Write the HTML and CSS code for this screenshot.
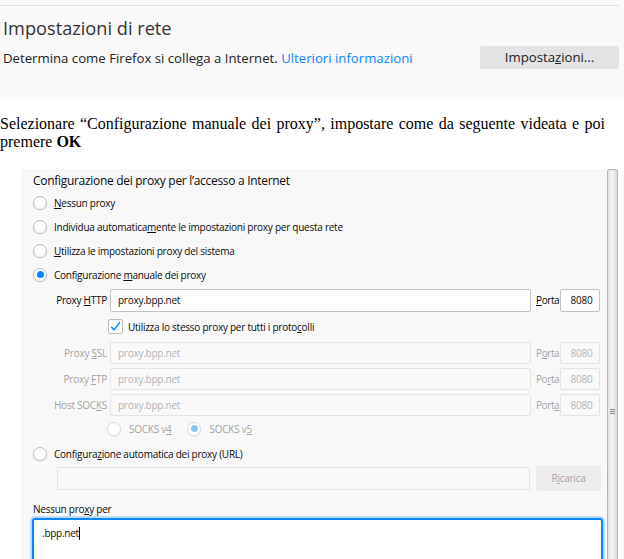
FILE: index.html
```html
<!DOCTYPE html>
<html lang="it">
<head>
<meta charset="utf-8">
<title>Impostazioni di rete</title>
<link rel="stylesheet" href="styles.css">
</head>
<body>
<section class="net">
  <div class="net-rule"></div>
  <h2 class="net-title">Impostazioni di rete</h2>
  <div class="net-row">
    <p class="net-desc">Determina come Firefox si collega a Internet. <a class="net-link">Ulteriori informazioni</a></p>
    <div class="net-btn">Imposta<u>z</u>ioni...</div>
  </div>
</section>

<p class="instr"><span>Selezionare “Configurazione manuale dei proxy”, impostare come da seguente videata e poi</span> <span>premere</span> <b>OK</b></p>

<div class="shot">
  <div class="panel">
    <div class="p-head">Configurazione dei proxy per l’accesso a Internet</div>

    <div class="rrow first"><span class="radio"></span><span><u>N</u>essun proxy</span></div>
    <div class="rrow"><span class="radio"></span><span>Individua automatica<u>m</u>ente le impostazioni proxy per questa rete</span></div>
    <div class="rrow"><span class="radio"></span><span><u>U</u>tilizza le impostazioni proxy del sistema</span></div>
    <div class="rrow"><span class="radio on"></span><span>Configurazione <u>m</u>anuale dei proxy</span></div>

    <div class="field http">
      <span class="f-label">Proxy <u>H</u>TTP</span>
      <div class="f-input">proxy.bpp.net</div>
      <span class="f-porta"><u>P</u>orta</span>
      <div class="f-port">8080</div>
    </div>

    <div class="crow"><span class="check"><svg viewBox="0 0 15 15" width="15" height="15"><path d="M3.6 8.2 L6.2 10.9 L11.6 3.6" fill="none" stroke="#0a84ff" stroke-width="1.5" stroke-linecap="round" stroke-linejoin="round"/></svg></span><span>Utilizza lo stesso proxy per tutti i proto<u>c</u>olli</span></div>

    <div class="field dis">
      <span class="f-label">Proxy <u>S</u>SL</span>
      <div class="f-input">proxy.bpp.net</div>
      <span class="f-porta">P<u>o</u>rta</span>
      <div class="f-port">8080</div>
    </div>
    <div class="field dis gap">
      <span class="f-label">Proxy <u>F</u>TP</span>
      <div class="f-input">proxy.bpp.net</div>
      <span class="f-porta">Po<u>r</u>ta</span>
      <div class="f-port">8080</div>
    </div>
    <div class="field dis gap">
      <span class="f-label">Host SOC<u>K</u>S</span>
      <div class="f-input">proxy.bpp.net</div>
      <span class="f-porta">Port<u>a</u></span>
      <div class="f-port">8080</div>
    </div>

    <div class="srow">
      <span class="radio dis"></span><span class="s-label">SOCKS v<u>4</u></span>
      <span class="radio dis on"></span><span class="s-label">SOCKS v<u>5</u></span>
    </div>

    <div class="rrow"><span class="radio"></span><span>Configura<u>z</u>ione automatica dei proxy (URL)</span></div>

    <div class="urow">
      <div class="u-input"></div>
      <div class="u-btn">R<u>i</u>carica</div>
    </div>

    <div class="np-label">Nessun pro<u>x</u>y per</div>
    <div class="np-area">.bpp.net<span class="caret"></span></div>
  </div>
  <div class="sbar"><div class="thumb"><span class="grip"></span></div></div>
</div>
</body>
</html>
```

FILE: styles.css
```css
html, body {
  margin: 0;
  padding: 0;
  height: 559px;
  overflow: hidden;
  background: #fff;
}

body {
  font-family: "Open Sans", "Noto Sans", sans-serif;
  color: #0c0c0d;
}

/* ---------- Firefox network section ---------- */
.net {
  background: #f9f9f9;
  height: 97px;
  box-sizing: border-box;
  padding-top: 5px;
}

.net-rule {
  width: 619px;
  height: 1px;
  background: #e0e0e2;
}

.net-title {
  margin: 11px 0 0 3px;
  font-size: 18.2px;
  line-height: 23px;
  font-weight: 400;
  color: #333;
}

.net-row {
  display: flex;
  align-items: center;
  height: 23px;
  margin: 6px 5px 0 3px;
}

.net-desc {
  flex: 1;
  margin: 0;
  font-size: 13.2px;
  color: #222;
  white-space: nowrap;
}

.net-link {
  color: #0a84ff;
}

.net-btn {
  width: 139px;
  height: 23px;
  line-height: 23px;
  text-align: center;
  background: #e3e3e5;
  border-radius: 2px;
  font-size: 13.2px;
  color: #222;
}

/* ---------- instruction ---------- */
.instr {
  width: 605px;
  margin: 18px 0 0;
  font-family: "Liberation Serif", "Times New Roman", serif;
  font-size: 16px;
  line-height: 18.4px;
  text-align: justify;
  color: #000;
}

/* ---------- screenshot of proxy dialog ---------- */
.shot {
  display: flex;
  align-items: flex-start;
  margin-top: 17px;
}

.panel {
  width: 586px;
  height: 420px;
  box-sizing: border-box;
  margin-left: 21px;
  padding: 4px 5px 0 12px;
  background: #f8f8f8;
  font-size: 10px;
  letter-spacing: -0.25px;
  color: #0c0c0d;
  display: flex;
  flex-direction: column;
}

.p-head {
  font-size: 12px;
  letter-spacing: -0.3px;
  line-height: 16px;
  height: 16px;
}

.rrow {
  display: flex;
  align-items: center;
  gap: 7px;
  height: 24px;
  flex: none;
}

.rrow.first {
  margin-top: 2px;
}

.radio {
  width: 14px;
  height: 14px;
  box-sizing: border-box;
  border: 1px solid #bcbcbe;
  border-radius: 50%;
  background: #fff;
  display: grid;
  place-items: center;
  flex: none;
  box-shadow: 0 1px 1px rgba(0, 0, 0, 0.05);
}

.radio.on::after {
  content: "";
  width: 7px;
  height: 7px;
  border-radius: 50%;
  background: #0a84ff;
}

.radio.dis {
  border-color: #dcdcde;
}

.radio.dis.on::after {
  background: #8ec4f7;
}

/* proxy fields */
.field {
  display: flex;
  align-items: center;
  height: 22px;
  flex: none;
}

.field.http {
  height: 23px;
  margin-top: 2px;
}

.field.gap {
  margin-top: 4px;
}

.f-label {
  width: 74px;
  margin-right: 3px;
  text-align: right;
  white-space: nowrap;
}

.f-input {
  width: 421px;
  height: 100%;
  box-sizing: border-box;
  border: 1px solid #c4c4c6;
  border-radius: 2px;
  background: #fff;
  padding-left: 7px;
  display: flex;
  align-items: center;
}

.f-porta {
  width: 24px;
  margin-left: 5px;
  white-space: nowrap;
  letter-spacing: -0.4px;
}

.f-port {
  width: 40px;
  height: 100%;
  box-sizing: border-box;
  border: 1px solid #c4c4c6;
  border-radius: 2px;
  background: #fff;
  display: flex;
  align-items: center;
  justify-content: center;
  padding-left: 3px;
}

.field.dis {
  color: #a4a4a6;
}

.field.dis .f-input,
.field.dis .f-port {
  background: #f9f9f9;
  border-color: #e4e4e6;
  color: #b4b4b6;
}

/* checkbox row */
.crow {
  display: flex;
  align-items: center;
  gap: 5px;
  height: 30px;
  padding-left: 75px;
  flex: none;
}

.check {
  width: 15px;
  height: 15px;
  box-sizing: border-box;
  border: 1px solid #bcbcbe;
  border-radius: 2px;
  background: #fff;
  display: grid;
  place-items: center;
  flex: none;
}

.check svg {
  display: block;
  margin: -1px;
}

/* socks row */
.srow {
  display: flex;
  align-items: center;
  height: 26px;
  padding-left: 74px;
  flex: none;
  color: #a4a4a6;
}

.srow .radio + .s-label {
  margin-left: 8px;
}

.srow .s-label:nth-child(2) {
  margin-right: 16px;
}

/* url row */
.urow {
  display: flex;
  align-items: center;
  height: 25px;
  padding-left: 24px;
  flex: none;
}

.u-input {
  width: 473px;
  height: 23px;
  box-sizing: border-box;
  border: 1px solid #e4e4e6;
  border-radius: 2px;
  background: #f9f9f9;
}

.u-btn {
  width: 65px;
  height: 25px;
  margin-left: 6px;
  line-height: 25px;
  text-align: center;
  background: #ededef;
  border-radius: 2px;
  color: #a4a4a6;
}

.np-label {
  margin-top: 10px;
  line-height: 16px;
  height: 16px;
  flex: none;
}

.np-area {
  margin-top: 2px;
  width: 569px;
  height: 60px;
  box-sizing: border-box;
  border: 1px solid #0a84ff;
  border-radius: 2px;
  box-shadow: 0 0 0 1px #0a84ff, 0 0 0 3px rgba(10, 132, 255, 0.25);
  background: #fff;
  padding: 5px 8px;
  line-height: 16px;
  flex: none;
}

.caret {
  display: inline-block;
  width: 1px;
  height: 13px;
  background: #000;
  vertical-align: -3px;
}

/* scrollbar */
.sbar {
  width: 11px;
  flex: none;
}

.thumb {
  height: 486px;
  box-sizing: border-box;
  border: 1px solid #b4b4b6;
  border-radius: 2px 2px 0 0;
  background: linear-gradient(to right, #e2e2e4, #f4f4f5 45%, #dadadc);
  display: flex;
  align-items: center;
  justify-content: center;
}

.grip {
  width: 5px;
  height: 5px;
  background: repeating-linear-gradient(to bottom, #8a8a8c 0 1px, transparent 1px 2px);
}
```
